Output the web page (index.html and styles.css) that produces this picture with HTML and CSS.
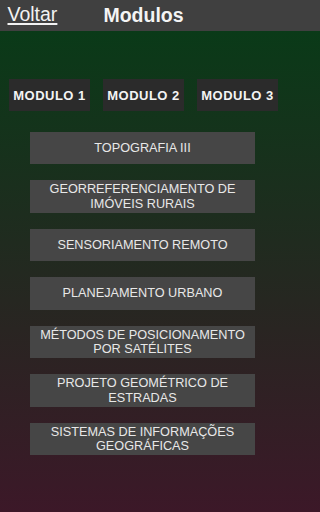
FILE: index.html
```html
<!DOCTYPE html>
<html lang="pt">
<head>
<meta charset="utf-8">
<title>Modulos</title>
<link rel="stylesheet" href="styles.css">
</head>
<body>
<div class="screen">
  <header class="topbar">
    <div class="bar-inner">
      <a class="back" href="#">Voltar</a>
      <h1 class="title">Modulos</h1>
    </div>
  </header>
  <main class="content">
    <nav class="modules">
      <button class="mod">MODULO 1</button>
      <button class="mod">MODULO 2</button>
      <button class="mod">MODULO 3</button>
    </nav>
    <ul class="list">
      <li class="item">TOPOGRAFIA III</li>
      <li class="item">GEORREFERENCIAMENTO DE<br>IMÓVEIS RURAIS</li>
      <li class="item">SENSORIAMENTO REMOTO</li>
      <li class="item">PLANEJAMENTO URBANO</li>
      <li class="item">MÉTODOS DE POSICIONAMENTO<br>POR SATÉLITES</li>
      <li class="item">PROJETO GEOMÉTRICO DE<br>ESTRADAS</li>
      <li class="item">SISTEMAS DE INFORMAÇÕES<br>GEOGRÁFICAS</li>
    </ul>
  </main>
</div>
</body>
</html>
```

FILE: styles.css
```css
* { box-sizing: border-box; }
html {
  background: #232920;
}
html, body {
  margin: 0;
  padding: 0;
  height: 512px;
  overflow: hidden;
}
body {
  font-family: "Liberation Sans", Arial, sans-serif;
  color: #fff;
}
.screen {
  min-width: 288px;
  height: 512px;
  display: flex;
  flex-direction: column;
}
.topbar {
  height: 30.5px;
  background: #404040;
  flex: none;
}
.bar-inner {
  position: relative;
  width: 288px;
  height: 100%;
  display: flex;
  align-items: center;
  justify-content: center;
}
.back {
  position: absolute;
  left: 7.5px;
  top: 3px;
  font-size: 19.5px;
  line-height: 22px;
  color: #f2f2f2;
  text-decoration: underline;
  text-decoration-thickness: 1.5px;
  text-underline-offset: 2px;
}
.title {
  margin: 0;
  font-size: 19.5px;
  font-weight: bold;
  line-height: 22px;
  color: #f4f4f4;
  margin-top: -1px;
  margin-left: -1px;
}
.content {
  flex: 1;
  background: linear-gradient(180deg, #0a3a18 0%, #3c1828 100%);
  padding-top: 48.5px;
}
.modules {
  display: flex;
  gap: 13px;
  padding-left: 9px;
}
.mod {
  width: 81px;
  height: 32px;
  border: 0;
  padding: 0;
  background: #2b2b2b;
  color: #f4f4f4;
  font-family: "Liberation Sans", Arial, sans-serif;
  font-weight: bold;
  font-size: 13px;
  letter-spacing: 0.5px;
}
.list {
  list-style: none;
  margin: 21px 0 0 30px;
  padding: 0;
  width: 225px;
  display: flex;
  flex-direction: column;
  gap: 16.2px;
}
.item {
  height: 32.3px;
  background: #464646;
  color: #e8e8e8;
  font-size: 12.7px;
  line-height: 14.5px;
  text-align: center;
  display: flex;
  align-items: center;
  justify-content: center;
}
```
